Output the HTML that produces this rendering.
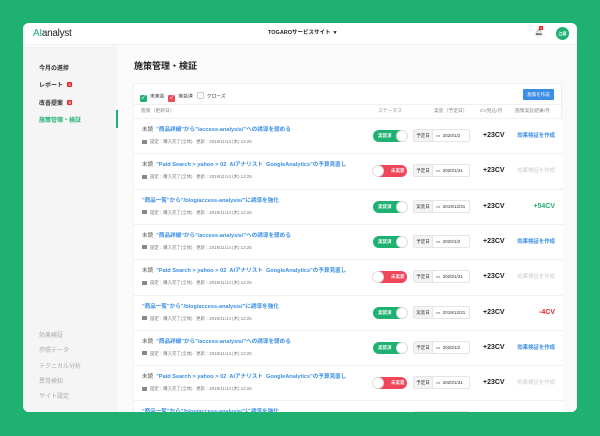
<!DOCTYPE html><html><head><meta charset="utf-8"><style>
*{margin:0;padding:0;box-sizing:border-box}
body{width:600px;height:436px;background:#1fb172;font-family:"Liberation Sans","Noto Sans CJK JP",sans-serif;position:relative;overflow:hidden;color:#333}
.win{position:absolute;left:23px;top:23px;width:554px;height:389px;background:#fff;border-radius:6px;overflow:hidden}
.hdr{position:absolute;left:0;top:0;width:554px;height:22px;border-bottom:1px solid #eee;background:#fff}
.side{position:absolute;left:0;top:23px;width:95px;height:366px;background:#f5f5f5}
.side div{position:absolute;left:16px;font-size:6px;font-weight:bold;color:#333}
.side .g{color:#aaa;font-weight:normal}
.badge{display:inline-block;background:#e8262e;color:#fff;font-size:4px;padding:0 1.5px;margin-left:4px;border-radius:1px;vertical-align:1px}
.main{position:absolute;left:96px;top:23px;width:458px;height:366px;background:#fafafa}
.panel{position:absolute;left:14px;top:37px;width:429px;height:340px;background:#fff;border:1px solid #f0f0f0}
.row{position:absolute;left:0;width:429px;height:35px;border-top:1px solid #f0f0f0;background:#fff}
.t{position:absolute;left:8px;top:8px;font-size:5.6px;line-height:7px;color:#3b8ee6;font-weight:bold;white-space:nowrap}
.t b{color:#555;font-weight:normal;margin-right:3px}
.m{position:absolute;left:8px;top:20px;font-size:4.4px;line-height:6px;color:#777;white-space:nowrap}
.m i{display:inline-block;width:5px;height:4px;background:#888;margin-right:3px;vertical-align:-0.5px}
.tg{position:absolute;left:239px;top:11px;width:34px;height:12px;border-radius:6px;font-size:4.5px;color:#fff;font-weight:bold;line-height:12px}
.tg.on{background:#1fb172;padding-left:5px}
.tg.off{background:#f0465a;padding-left:18px}
.tg s{position:absolute;top:0;width:12px;height:12px;border-radius:6px;background:#fff;border:1px solid #ddd;text-decoration:none}
.tg.on s{right:-1px}.tg.off s{left:-1px}
.dt{position:absolute;left:279px;top:10px;width:57px;height:13px;border:1px solid #e5e5e5;border-radius:2px;font-size:4.5px;line-height:11px;color:#333}
.dt span{display:inline-block;width:19px;background:#f3f3f3;text-align:center;border-right:1px solid #e5e5e5;height:11px}
.dt em{font-style:normal;position:absolute;left:22px;top:0}
.cv{position:absolute;left:349px;top:11px;font-size:7px;line-height:12px;font-weight:bold;color:#222}
.r{position:absolute;right:8px;top:11px;line-height:12px;font-size:5.4px;color:#3b8ee6;font-weight:bold}
.r.gr{color:#ccc;font-weight:normal}.r.p{color:#1fb172;font-size:7px}.r.n{color:#e8262e;font-size:7px}
.ck{display:inline-block;width:7px;height:7px;border-radius:1.5px;vertical-align:-1.5px;margin-right:3px;color:#fff;font-size:6px;line-height:7px;text-align:center}
</style></head><body>
<div class="win">
<div class="hdr">
<div style="position:absolute;left:10px;top:5px;font-size:10px;line-height:12px;color:#222;letter-spacing:-0.3px"><span style="color:#1fb172">AI</span>analyst</div>
<div style="position:absolute;left:245px;top:7px;font-size:5.5px;line-height:7px;font-weight:bold;color:#222">TOGAROサービスサイト &nbsp;▾</div>
<div style="position:absolute;left:511px;top:6px;width:9px;height:9px;border-radius:5px;background:#f3f3f3;font-size:6px;text-align:center;line-height:9px">🔔︎</div>
<div style="position:absolute;left:516px;top:3px;width:4px;height:4px;background:#e8262e;font-size:3px;color:#fff;text-align:center;line-height:4px">4</div>
<div style="position:absolute;left:533px;top:4px;width:13px;height:13px;border-radius:7px;background:#1fb172;color:#fff;font-size:4px;text-align:center;line-height:13px;font-weight:bold">江藤</div>
</div>
<div class="side">
<div style="top:17px">今月の進捗</div>
<div style="top:34px">レポート<span class="badge">2</span></div>
<div style="top:52px">改善提案<span class="badge">5</span></div>
<div style="top:69px;color:#1fb172">施策管理・検証</div>
<div style="position:absolute;left:93px;top:64px;width:2px;height:18px;background:#1fb172"></div>
<div class="g" style="top:284px">効果検証</div>
<div class="g" style="top:299px">参照データ</div>
<div class="g" style="top:315px">テクニカル分析</div>
<div class="g" style="top:330px">異常検知</div>
<div class="g" style="top:345px">サイト設定</div>
</div>
<div class="main">
<div style="position:absolute;left:15px;top:14px;font-size:9px;line-height:12px;font-weight:bold;color:#222">施策管理・検証</div>
<div class="panel">
<div style="position:absolute;left:6px;top:8px;font-size:4.8px;line-height:8px;color:#333"><span class="ck" style="background:#1fb172">✓</span>未実装 &nbsp;&nbsp;<span class="ck" style="background:#f0465a">✓</span>実装済 &nbsp;&nbsp;<span class="ck" style="border:1px solid #ccc"></span>クローズ</div>
<div style="position:absolute;right:7px;top:5px;width:31px;height:11px;background:#3b8ee6;color:#fff;font-size:4.5px;text-align:center;line-height:11px;border-radius:1px">施策を作成</div>
<div style="position:absolute;left:0;top:20px;width:429px;height:14px;border-top:1px solid #f0f0f0;font-size:4.8px;color:#888;line-height:14px">
<span style="position:absolute;left:7px">施策（更新日）</span><span style="position:absolute;left:244px">ステータス</span><span style="position:absolute;left:300px">実装（予定日）</span><span style="position:absolute;left:346px">CV見込/月</span><span style="position:absolute;left:381px">施策実装結果/月</span></div>
<div id="rows"></div>
</div></div></div>
<script>
var A='<b>未読</b>"商品詳細"から"/access-analysis/"への誘導を弱める',B='<b>未読</b>"Paid Search > yahoo > 02 &nbsp;AIアナリスト &nbsp;GoogleAnalytics"の予算見直し',C='"商品一覧"から"/blog/access-analysis/"に誘導を強化';
var d=[[A,1,'予定日','2020/1/2','<div class="r">効果検証を作成</div>'],[B,0,'予定日','2020/1/31','<div class="r gr">効果検証を作成</div>'],[C,1,'実装日','2019/12/31','<div class="r p">+54CV</div>'],[A,1,'予定日','2020/1/2','<div class="r">効果検証を作成</div>'],[B,0,'予定日','2020/1/31','<div class="r gr">効果検証を作成</div>'],[C,1,'実装日','2019/12/31','<div class="r n">-4CV</div>'],[A,1,'予定日','2020/1/2','<div class="r">効果検証を作成</div>'],[B,0,'予定日','2020/1/31','<div class="r gr">効果検証を作成</div>'],[C,1,'実装日','2019/12/31','<div class="r p">+54CV</div>']];
var h='';d.forEach(function(r,i){h+='<div class="row" style="top:'+(34+i*35.3)+'px"><div class="t">'+r[0]+'</div><div class="m"><i></i>設定：購入完了(全体) &nbsp;&nbsp;更新：2019/11/14 (木) 12:25</div>'+(r[1]?'<div class="tg on">実装済<s></s></div>':'<div class="tg off"><s></s>未実装</div>')+'<div class="dt"><span>'+r[2]+'</span><em>▭ &nbsp;'+r[3]+'</em></div><div class="cv">+23CV</div>'+r[4]+'</div>'});
document.getElementById('rows').innerHTML=h;
</script>
</body></html>
